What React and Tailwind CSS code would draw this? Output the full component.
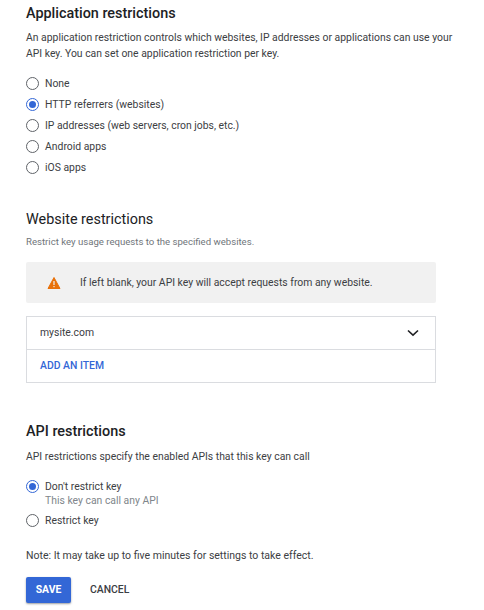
const font = { fontFamily: "Roboto, sans-serif" };

function Radio({ checked, label, sub }) {
  return (
    <div className="flex items-start gap-[6px]">
      <span className={`mt-[2px] flex h-[13px] w-[13px] shrink-0 items-center justify-center rounded-full border ${checked ? "border-[#3367d6]" : "border-[#5f6368]"}`}>
        {checked && <span className="h-[7px] w-[7px] rounded-full bg-[#3367d6]" />}
      </span>
      <div className="pt-[1px]">
        <div className="text-[10.4px] leading-[16px] text-[#3c4043]">{label}</div>
        {sub && <div className="mb-[1px] text-[10.4px] leading-[12px] text-[#80868b]">{sub}</div>}
      </div>
    </div>
  );
}

export default function App() {
  return (
    <div className="h-[610px] w-[484px] overflow-hidden bg-white pl-[26px] pr-[28px] pt-[4px] antialiased" style={font}>
      <h2 className="text-[14.4px] font-medium leading-[20px] text-[#202124]">Application restrictions</h2>
      <p className="mt-[6px] text-[10.4px] leading-[16px] text-[#3c4043]">
        An application restriction controls which websites, IP addresses or applications can use your API key. You can set one application restriction per key.
      </p>
      <div className="mt-[13px] flex flex-col gap-[4px]">
        <Radio label="None" />
        <Radio checked label="HTTP referrers (websites)" />
        <Radio label="IP addresses (web servers, cron jobs, etc.)" />
        <Radio label="Android apps" />
        <Radio label="iOS apps" />
      </div>

      <h2 className="mt-[34px] text-[14.4px] leading-[20px] text-[#202124]">Website restrictions</h2>
      <p className="mt-[4px] text-[9.6px] leading-[16px] text-[#70757a]">Restrict key usage requests to the specified websites.</p>

      <div className="mt-[12px] flex h-[41px] w-[410px] items-center rounded-[2px] bg-[#f1f1f1] pl-[21px]">
        <svg width="14" height="12" viewBox="0 0 14 12" className="shrink-0">
          <path d="M7 0.5 L13 11.5 H1 Z" fill="#e8710a" stroke="#e8710a" strokeLinejoin="round" />
          <rect x="6.4" y="4" width="1.2" height="4" fill="#f1f1f1" />
          <rect x="6.4" y="9" width="1.2" height="1.2" fill="#f1f1f1" />
        </svg>
        <span className="ml-[19px] text-[10.4px] text-[#3c4043]">If left blank, your API key will accept requests from any website.</span>
      </div>

      <div className="mt-[13px] w-[410px] border border-[#dadce0]">
        <div className="flex h-[33px] items-center justify-between border-b border-[#dadce0] pl-[13px] pr-[16px]">
          <span className="text-[10.4px] text-[#3c4043]">mysite.com</span>
          <svg width="12" height="8" viewBox="0 0 12 8" fill="none">
            <path d="M1 1.5 L6 6.2 L11 1.5" stroke="#202124" strokeWidth="1.6" />
          </svg>
        </div>
        <div className="flex h-[32px] items-center pl-[13px]">
          <span className="text-[10.4px] font-medium text-[#3367d6]">ADD AN ITEM</span>
        </div>
      </div>

      <h2 className="mt-[39px] text-[14.4px] font-medium leading-[20px] text-[#202124]">API restrictions</h2>
      <p className="mt-[7px] text-[10.4px] leading-[16px] text-[#3c4043]">API restrictions specify the enabled APIs that this key can call</p>
      <div className="mt-[13px] flex flex-col gap-[4px]">
        <Radio checked label="Don't restrict key" sub="This key can call any API" />
        <Radio label="Restrict key" />
      </div>
      <p className="mt-[19px] text-[10.5px] leading-[16px] text-[#3c4043]">Note: It may take up to five minutes for settings to take effect.</p>
      <div className="mt-[13px] flex items-center">
        <button className="h-[26px] w-[45px] rounded-[2px] bg-[#3367d6] text-[10.4px] font-bold text-white shadow-[0_1px_2px_rgba(60,64,67,0.5)]">SAVE</button>
        <button className="ml-[19px] text-[10.4px] font-medium text-[#3c4043]">CANCEL</button>
      </div>
    </div>
  );
}
